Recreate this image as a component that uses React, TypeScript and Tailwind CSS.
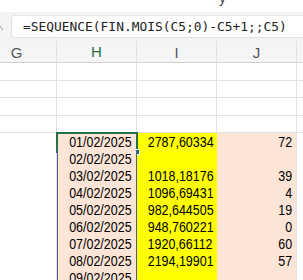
import React from "react";

const rows: [string, string, string][] = [
  ["01/02/2025", "2787,60334", "72"],
  ["02/02/2025", "", ""],
  ["03/02/2025", "1018,18176", "39"],
  ["04/02/2025", "1096,69431", "4"],
  ["05/02/2025", "982,644505", "19"],
  ["06/02/2025", "948,760221", "0"],
  ["07/02/2025", "1920,66112", "60"],
  ["08/02/2025", "2194,19901", "57"],
  ["09/02/2025", "", ""],
];

const cellFont = { fontFamily: '"Liberation Sans", Arial, sans-serif' };
const gridCell = "border-r border-b border-[#e1e1e1] bg-white";

// narrow sheet font: squeeze Liberation Sans towards Aptos Narrow widths
function Val({ children }: { children: React.ReactNode }) {
  return <span className="inline-block origin-right scale-x-[0.86] whitespace-nowrap">{children}</span>;
}

export default function App() {
  return (
    <div className="w-[303px] h-[280px] overflow-hidden bg-white">
      {/* ribbon edge */}
      <div className="h-[12px] bg-white relative overflow-hidden">
        <span className="absolute left-[219px] top-[-12px] text-[14px] text-[#444]" style={cellFont}>y</span>
      </div>

      {/* formula bar */}
      <div className="h-[29px] bg-[#f3f3f3] flex items-center">
        <div className="w-[11px] h-full flex items-center">
          <svg width="6" height="8" viewBox="0 0 6 8" className="mt-[3px]">
            <path d="M0 2 L3 6" stroke="#9a9a9a" strokeWidth="1" fill="none" />
          </svg>
        </div>
        <div className="flex-1 h-[23px] bg-white border border-[#e3e3e3] border-r-0 rounded-l-[4px] flex items-center pl-[11px]">
          <span
            className="text-[12.9px] text-[#222] whitespace-nowrap"
            style={{ fontFamily: '"DejaVu Sans Mono", "Liberation Mono", monospace' }}
          >
            =SEQUENCE(FIN.MOIS(C5;0)-C5+1;;C5)
          </span>
        </div>
      </div>

      {/* sheet */}
      <div className="ml-[-23px]">
        <div className="grid grid-cols-[80px_80px_80px_80px_80px] h-[22px] bg-[#f5f5f5] border-b border-[#d0d0d0]" style={cellFont}>
          <div className="flex items-center justify-center border-r border-[#e0e0e0] text-[15px] text-[#555]">G</div>
          <div className="flex items-center justify-center border-r border-[#e0e0e0] border-b-2 border-b-[#217346] text-[15px] text-[#217346]">H</div>
          <div className="flex items-center justify-center border-r border-[#e0e0e0] text-[15px] text-[#555]">I</div>
          <div className="flex items-center justify-center border-r border-[#e0e0e0] text-[15px] text-[#555]">J</div>
          <div />
        </div>

        {[0, 1, 2, 3].map((i) => (
          <div key={i} className="grid grid-cols-[80px_80px_80px_80px_80px] h-[17.5px]">
            <div className={gridCell} />
            <div className={gridCell} />
            <div className={gridCell} />
            <div className={gridCell} />
            <div className={gridCell} />
          </div>
        ))}

        {rows.map(([d, v, n], i) => (
          <div key={i} className="grid grid-cols-[80px_80px_80px_80px_80px] h-[17px] text-[14.5px] leading-[19px] text-black" style={cellFont}>
            <div className={gridCell} />
            <div className="relative bg-[#fce4d6] border-x border-[#4a5f9c] text-right pr-[4px]">
              <Val>{d}</Val>
              {i === 0 && (
                <>
                  <div className="absolute left-[-2px] top-[-1px] right-[-2px] bottom-[-1px] border-2 border-[#217346]" />
                  <div className="absolute right-[-4px] bottom-[-3px] w-[6px] h-[6px] bg-[#217346] border border-white" />
                </>
              )}
            </div>
            <div className="bg-[#ffff00] text-right pr-[4px]"><Val>{v}</Val></div>
            <div className="bg-[#fce4d6] text-right pr-[4px] border-r border-[#e1e1e1]"><Val>{n}</Val></div>
            <div className={gridCell} />
          </div>
        ))}
      </div>
    </div>
  );
}
